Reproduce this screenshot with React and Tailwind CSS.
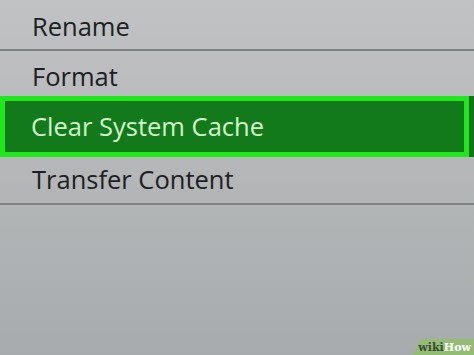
export default function App() {
  const font = { fontFamily: '"Open Sans", "Noto Sans", sans-serif' };
  return (
    <div
      className="relative w-[474px] h-[355px] overflow-hidden bg-gradient-to-b from-[#c0c2c3] to-[#a8abad]"
      style={font}
    >
      <div className="flex flex-col text-[25.5px] leading-none">
        <div className="h-[49px] pl-[32px] pt-[14px] text-[#1d2023]">Rename</div>
        <div className="h-[2px] bg-[#7f8284]" />
        <div className="h-[45px] pl-[32px] pt-[13px] text-[#1d2023]">Format</div>
        <div className="h-[61px] flex bg-[#13751a]">
          <div className="w-[469px] border-[5px] border-[#1fe81c] bg-[#137a1b] pl-[26px] pt-[13px] text-[#d2f5cc]">
            Clear System Cache
          </div>
        </div>
        <div className="h-[46px] pl-[32px] pt-[10px] text-[#1d2023]">Transfer Content</div>
        <div className="h-[2px] bg-[#7f8284]" />
      </div>
      <div
        className="absolute right-0 bottom-0 h-[16px] w-[61px] bg-[#93bd74] [clip-path:polygon(8px_0,100%_0,100%_100%,0_100%)] flex items-center justify-end pr-[3px] text-[11px] font-bold leading-none"
        style={{ fontFamily: '"DejaVu Serif", serif' }}
      >
        <span className="text-[#3a4a34]">wiki</span>
        <span className="text-white">How</span>
      </div>
    </div>
  );
}
